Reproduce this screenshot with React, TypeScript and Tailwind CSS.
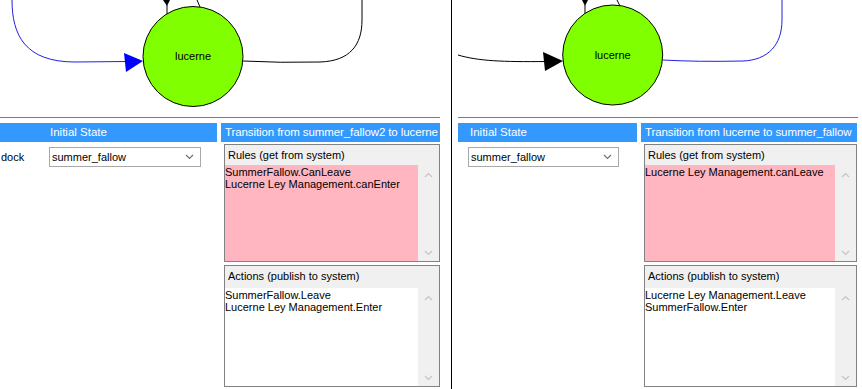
import React from "react";

type ListBoxProps = {
  label: string;
  items: string[];
  tone: "pink" | "white";
  height: string;
  labelHeight: string;
};

function ChevronUp() {
  return (
    <svg width="9" height="6" viewBox="0 0 9 6">
      <polyline points="1,5 4.5,1.5 8,5" fill="none" stroke="#c4c4c4" strokeWidth="1.2" />
    </svg>
  );
}

function ChevronDown({ color = "#c4c4c4" }: { color?: string }) {
  return (
    <svg width="9" height="6" viewBox="0 0 9 6">
      <polyline points="1,1 4.5,4.5 8,1" fill="none" stroke={color} strokeWidth="1.2" />
    </svg>
  );
}

function ListBox({ label, items, tone, height, labelHeight }: ListBoxProps) {
  return (
    <div className={`flex flex-col border border-[#828282] bg-[#f0f0f0] ${height}`}>
      <div className={`pl-[3px] leading-[20px] ${labelHeight}`}>{label}</div>
      <div className="flex min-h-0 flex-1">
        <div
          className={`flex-1 pt-[1px] leading-[12px] ${
            tone === "pink" ? "bg-[#ffb6c1]" : "bg-white"
          }`}
        >
          {items.map((item) => (
            <div key={item} className="whitespace-nowrap">
              {item}
            </div>
          ))}
        </div>
        <div className="flex w-[21px] flex-col items-center justify-between pb-[5px] pt-[7px]">
          <ChevronUp />
          <ChevronDown />
        </div>
      </div>
    </div>
  );
}

function Dropdown({ value, className }: { value: string; className: string }) {
  return (
    <div
      className={`flex h-[20px] items-center justify-between border border-[#a9a9a9] bg-white pl-[2px] pr-[6px] ${className}`}
    >
      <span>{value}</span>
      <ChevronDown color="#707070" />
    </div>
  );
}

function TransitionColumn({
  title,
  rules,
  actions,
  width,
}: {
  title: string;
  rules: string[];
  actions: string[];
  width: string;
}) {
  return (
    <div className={`flex flex-col ${width}`}>
      <div className="h-[19px] overflow-hidden whitespace-nowrap bg-[#3399ff] pl-[4px] text-[11.5px] leading-[19px] tracking-[-0.1px] text-white">
        {title}
      </div>
      <div className="mt-[2px] flex flex-col gap-[3px] pl-[3px]">
        <ListBox
          label="Rules (get from system)"
          items={rules}
          tone="pink"
          height="h-[118px]"
          labelHeight="h-[20px]"
        />
        <ListBox
          label="Actions (publish to system)"
          items={actions}
          tone="white"
          height="h-[122px]"
          labelHeight="h-[22px]"
        />
      </div>
    </div>
  );
}

function LeftGraph() {
  return (
    <svg width="440" height="117" viewBox="0 0 440 117" className="block">
      <path d="M 12 0 C 12 35 25 62 75 62 L 126 61.5" fill="none" stroke="#2020e0" strokeWidth="1" />
      <polygon points="143,61 124,53 126,72" fill="#0000ff" />
      <path
        d="M 243 61 Q 280 63 320 62 C 350 61 362 45 362 20 L 362 0"
        fill="none"
        stroke="#000"
        strokeWidth="1"
      />
      <polygon points="163,0 170,0 167,6" fill="#000" />
      <line x1="167" y1="5" x2="167" y2="14" stroke="#000" strokeWidth="1" />
      <line x1="197" y1="0" x2="200" y2="7" stroke="#000" strokeWidth="1" />
      <circle cx="193" cy="56.5" r="50" fill="#80ff00" stroke="#000" strokeWidth="1" />
      <text
        x="193"
        y="60"
        textAnchor="middle"
        fontSize="11"
        fontFamily="'Liberation Sans', Arial, sans-serif"
        fill="#000"
      >
        lucerne
      </text>
    </svg>
  );
}

function RightGraph() {
  return (
    <svg width="400" height="117" viewBox="0 0 400 117" className="block">
      <path d="M 0 55 C 20 61 45 62 88 61.5" fill="none" stroke="#000" strokeWidth="1" />
      <polygon points="105,61 85,52 87,71" fill="#000" />
      <path
        d="M 205 60 Q 240 62 285 61 C 310 60 324 45 324 20 L 324 0"
        fill="none"
        stroke="#2020e0"
        strokeWidth="1"
      />
      <polygon points="124,0 130,0 127,6" fill="#000" />
      <line x1="127" y1="5" x2="127" y2="14" stroke="#000" strokeWidth="1" />
      <line x1="159" y1="0" x2="162" y2="6" stroke="#000" strokeWidth="1" />
      <circle cx="154.7" cy="55" r="50" fill="#80ff00" stroke="#000" strokeWidth="1" />
      <text
        x="154.7"
        y="58.5"
        textAnchor="middle"
        fontSize="11"
        fontFamily="'Liberation Sans', Arial, sans-serif"
        fill="#000"
      >
        lucerne
      </text>
    </svg>
  );
}

export default function App() {
  return (
    <div className="flex h-[389px] w-[862px] overflow-hidden bg-white font-['Liberation_Sans',Arial,sans-serif] text-[11px] text-black">
      {/* left editor, scrolled so the name column is cut off */}
      <div className="flex w-[451px] flex-col">
        <LeftGraph />
        <div className="h-px w-[440px] bg-[#7a7a7a]" />
        <div className="mt-[5px] flex gap-[4px]">
          <div className="flex w-[217px] flex-col">
            <div className="h-[19px] bg-[#3399ff] pl-[50px] text-[11.5px] leading-[19px] text-white">
              Initial State
            </div>
            <div className="mt-[5px] flex items-center">
              <span className="w-[49px] pl-[1px]">dock</span>
              <Dropdown value="summer_fallow" className="w-[152px]" />
            </div>
          </div>
          <TransitionColumn
            width="w-[219px]"
            title="Transition from summer_fallow2 to lucerne"
            rules={["SummerFallow.CanLeave", "Lucerne Ley Management.canEnter"]}
            actions={["SummerFallow.Leave", "Lucerne Ley Management.Enter"]}
          />
        </div>
      </div>

      <div className="w-px bg-black" />

      <div className="flex flex-1 flex-col pl-[6px]">
        <RightGraph />
        <div className="h-px w-[400px] bg-[#7a7a7a]" />
        <div className="mt-[5px] flex gap-[4px]">
          <div className="flex w-[179px] flex-col">
            <div className="h-[19px] bg-[#3399ff] pl-[12px] text-[11.5px] leading-[19px] text-white">
              Initial State
            </div>
            <div className="mt-[5px] pl-[10px]">
              <Dropdown value="summer_fallow" className="w-[151px]" />
            </div>
          </div>
          <TransitionColumn
            width="w-[216px]"
            title="Transition from lucerne to summer_fallow"
            rules={["Lucerne Ley Management.canLeave"]}
            actions={["Lucerne Ley Management.Leave", "SummerFallow.Enter"]}
          />
        </div>
      </div>
    </div>
  );
}
